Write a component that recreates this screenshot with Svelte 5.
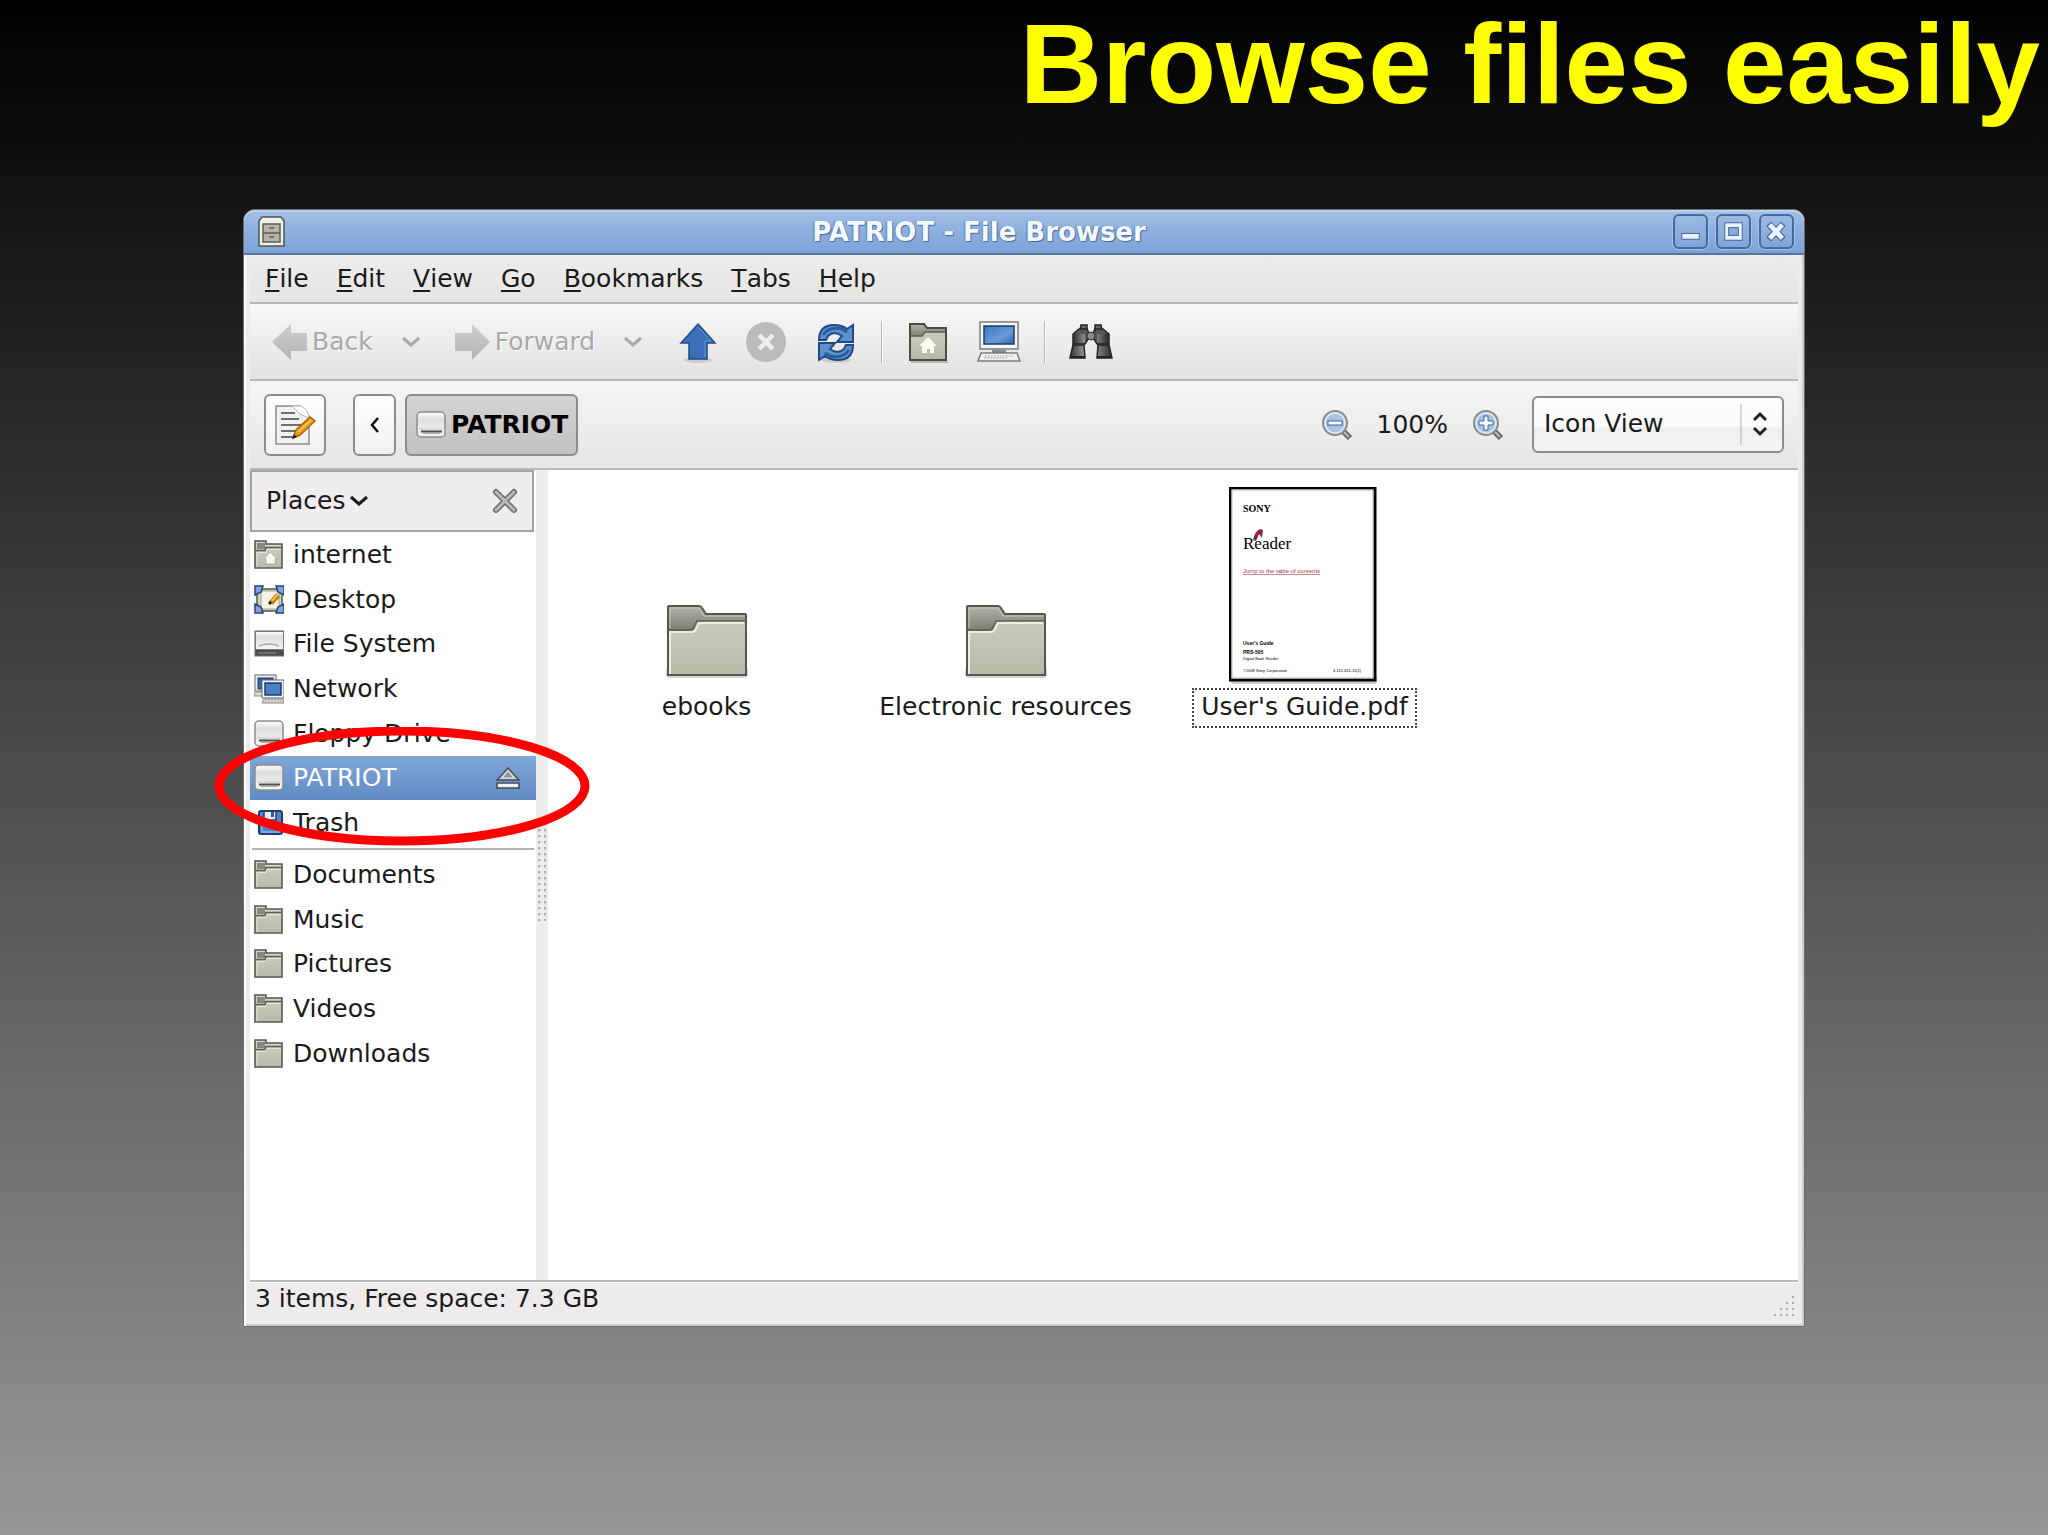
<script>
	let menus = ["File", "Edit", "View", "Go", "Bookmarks", "Tabs", "Help"];
	let places = [
		{ name: "internet", icon: "home" },
		{ name: "Desktop", icon: "desktop" },
		{ name: "File System", icon: "disk" },
		{ name: "Network", icon: "network" },
		{ name: "Floppy Drive", icon: "drive" },
		{ name: "PATRIOT", icon: "drive", eject: true },
		{ name: "Trash", icon: "trash" },
	];
	let bookmarks = ["Documents", "Music", "Pictures", "Videos", "Downloads"];
	let files = [
		{ name: "ebooks", type: "folder" },
		{ name: "Electronic resources", type: "folder" },
		{ name: "User's Guide.pdf", type: "pdf" },
	];

	let current = $state("PATRIOT");
	let focused = $state("User's Guide.pdf");
	let view = $state("Icon View");
</script>

{#snippet smallFolder(home)}
	<svg class="icon" viewBox="0 0 30 30" aria-hidden="true">
		<path d="M1 28V1h11v3h16v24z" fill="#d3d5c8" stroke="#55574e" stroke-width="1.600" />
		<path d="M3 3h8v6H3z" fill="#85887d" />
		<path d="M12 7h15v20H2V10h9z" fill="url(#folderFront)" />
		<path d="M2 10.500h9l1-3h15" fill="none" stroke="#5c5e54" stroke-width="1.600" />
		<path d="M3 27V12.500h9l1-3h14" fill="none" stroke="#e4e6da" />
		{#if home}
			<path d="M16 12l7 7h-2v5h-9v-5h-2z" fill="#f7f7ef" stroke="#a3a596" stroke-width=".7" />
		{/if}
	</svg>
{/snippet}

{#snippet drive()}
	<svg class="icon" viewBox="0 0 30 30" aria-hidden="true">
		<rect x="1" y="2" width="28" height="25" rx="4" fill="url(#driveTop)" stroke="#8b8d89" stroke-width="1.500" />
		<path d="M3 19h24" stroke="#c9c9c6" />
		<path d="M5 21.500h21" stroke="#4d4f4c" stroke-width="2" />
		<path d="M7 23.500h17" stroke="#aaa" />
	</svg>
{/snippet}

{#snippet placeIcon(kind)}
	{#if kind == "home"}
		{@render smallFolder(true)}
	{:else if kind == "drive"}
		{@render drive()}
	{:else if kind == "desktop"}
		<svg class="icon" viewBox="0 0 30 30" aria-hidden="true">
			<rect x="3" y="4" width="25" height="22" fill="#cfd3c2" stroke="#55574f" stroke-width="1.500" />
			<rect x="7" y="6" width="18" height="18" rx="2" fill="#f4f3e6" stroke="#a3a88d" />
			<path d="M1 1h8l-2 6-6 3zM30 1h-8l2 6 6 3zM1 28h8l-2-6-6-3zM30 28h-8l2-6 6-3z" fill="#7fa5dc" stroke="#1f4478" stroke-width="1.500" />
			<path d="M17 18l7-8" stroke="#b97a0a" stroke-width="5" />
			<path d="M18 16l6-7" stroke="#f5c24a" stroke-width="2" />
			<path d="M15 19l2-2" stroke="#222" stroke-width="3" />
		</svg>
	{:else if kind == "disk"}
		<svg class="icon" viewBox="0 0 30 30" aria-hidden="true">
			<rect x="1" y="2" width="29" height="25" fill="#4d4f4d" stroke="#6e706d" />
			<rect x="1.500" y="2.500" width="28" height="18" fill="url(#driveTop)" stroke="#777974" />
			<path d="M5 17q10-4 20 0" fill="none" stroke="#a9aaa8" stroke-width="1.500" />
			<path d="M4 24h18" stroke="#7b7d7a" stroke-width="1.500" />
		</svg>
	{:else if kind == "network"}
		<svg class="icon" viewBox="0 0 30 30" aria-hidden="true">
			<rect x="1" y="1" width="21" height="16" fill="#eee" stroke="#666" />
			<rect x="4" y="4" width="15" height="11" fill="#3465a4" stroke="#1d3c6b" />
			<path d="M1 18h9v4H0z" fill="#dadbcf" stroke="#8f9180" />
			<rect x="8" y="6" width="22" height="18" fill="#f4f4f2" stroke="#666" />
			<rect x="11" y="9" width="16" height="12" fill="#4a80c4" stroke="#1d3c6b" stroke-width="1.500" />
			<path d="M10 25h19l1 4H8z" fill="#e5e5e3" stroke="#888" />
			<path d="M11 27h17" stroke="#999" stroke-dasharray="2 1" />
		</svg>
	{:else}
		<svg class="icon" viewBox="0 0 30 30" aria-hidden="true">
			<rect x="5" y="3" width="23" height="23" rx="2" fill="#4e83c9" stroke="#1d3f75" stroke-width="2" />
			<path d="M10 4v8h12V4" fill="#e9eef6" stroke="#1d3f75" stroke-width="1.500" />
			<path d="M17 4v5h3V4z" fill="#2b5593" />
			<path d="M8 15v9h17v-9" fill="none" stroke="#8fb3e4" stroke-width="1.500" />
		</svg>
	{/if}
{/snippet}

{#snippet chevron()}
	<svg class="chevron" viewBox="0 0 20 12" aria-hidden="true">
		<path d="M2 2l8 7 8-7" fill="none" stroke="currentColor" stroke-width="3" />
	</svg>
{/snippet}

<svg class="defs" aria-hidden="true">
	<defs>
		<linearGradient id="folderBack" x2="0" y2="1">
			<stop offset="0" stop-color="#b2b3a8" />
			<stop offset=".35" stop-color="#7c7f74" />
			<stop offset="1" stop-color="#9b9d90" />
		</linearGradient>
		<linearGradient id="folderFront" x2="0" y2="1">
			<stop offset="0" stop-color="#c9cbbc" />
			<stop offset="1" stop-color="#b9bba9" />
		</linearGradient>
		<linearGradient id="driveTop" x2="0" y2="1">
			<stop offset="0" stop-color="#fff" />
			<stop offset=".3" stop-color="#dededd" />
			<stop offset="1" stop-color="#f6f6f4" />
		</linearGradient>
		<linearGradient id="grayArrow" x2="0" y2="1">
			<stop offset="0" stop-color="#d0cfcf" />
			<stop offset="1" stop-color="#b4b3b3" />
		</linearGradient>
		<linearGradient id="screen" x2="1" y2="1">
			<stop offset="0" stop-color="#3b74bd" />
			<stop offset=".6" stop-color="#6b9bd6" />
			<stop offset="1" stop-color="#3465a4" />
		</linearGradient>
		<linearGradient id="barrel" x2="1" y2="0">
			<stop offset="0" stop-color="#333" />
			<stop offset=".45" stop-color="#b5b5b5" />
			<stop offset="1" stop-color="#2c2c2c" />
		</linearGradient>
	</defs>
</svg>

<div class="slide">
	<h1>Browse files easily</h1>

	<main>
		<header class="titlebar">
			<svg class="app" viewBox="0 0 27 31" aria-hidden="true">
				<path d="M4 1h19l3 4v25H1V5z" fill="#f1f1ec" stroke="#4f5650" stroke-width="1.500" />
				<rect x="5" y="8" width="17" height="18" fill="#b4b5a6" stroke="#5c5e54" stroke-width="1.500" />
				<path d="M5 17h17M11 12h5M11 21h5" stroke="#5c5e54" stroke-width="1.500" />
			</svg>
			<h2>PATRIOT - File Browser</h2>
			<div class="controls">
				<button aria-label="Minimize">
					<svg viewBox="0 0 32 32"><rect x="7" y="18" width="18" height="6" fill="#e9f4ff" stroke="#3d6397" /></svg>
				</button>
				<button aria-label="Maximize">
					<svg viewBox="0 0 32 32">
						<rect x="7" y="7" width="18" height="18" fill="#e9f4ff" stroke="#3d6397" />
						<rect x="11" y="12" width="10" height="8" fill="#86abdd" stroke="#3d6397" />
					</svg>
				</button>
				<button aria-label="Close">
					<svg viewBox="0 0 32 32">
						<path d="M8 8l15 16M23 8L8 24" stroke="#3d6397" stroke-width="7" />
						<path d="M9 9l13 14M22 9L9 23" stroke="#e9f4ff" stroke-width="5" />
					</svg>
				</button>
			</div>
		</header>

		<nav class="menubar">
			{#each menus as menu}
				<button><u>{menu[0]}</u>{menu.slice(1)}</button>
			{/each}
		</nav>

		<div class="toolbar">
			<button class="nav" disabled>
				<svg viewBox="0 0 38 38" width="38" height="38" aria-hidden="true">
					<path d="M1 19L20 1v9h16v18H20v9z" fill="url(#grayArrow)" />
				</svg>Back
			</button>
			<button class="drop" disabled aria-label="Back history">{@render chevron()}</button>
			<button class="nav" disabled>
				<svg viewBox="0 0 38 38" width="38" height="38" aria-hidden="true">
					<path d="M36 19L18 1v9H1v18h17v9z" fill="url(#grayArrow)" />
				</svg>Forward
			</button>
			<button class="drop" disabled aria-label="Forward history">{@render chevron()}</button>
			<button class="tool up" aria-label="Up">
				<svg viewBox="0 0 44 44">
					<ellipse cx="22" cy="40" rx="14" ry="3" fill="#000" opacity=".12" />
					<path d="M22 4l17 19h-8v16H13V23H5z" fill="#3a70b5" stroke="#1f4a87" stroke-width="1.500" />
					<path d="M22 7l13 14h-6v16" fill="none" stroke="#6d9bd2" />
				</svg>
			</button>
			<button class="tool stop" disabled aria-label="Stop">
				<svg viewBox="0 0 44 44">
					<circle cx="22" cy="22" r="20" fill="#bcbbbb" />
					<path d="M15 15l14 14M29 15L15 29" stroke="#efeeee" stroke-width="4.500" />
				</svg>
			</button>
			<button class="tool" aria-label="Reload">
				<svg viewBox="0 0 44 44">
					<ellipse cx="22" cy="40" rx="15" ry="3" fill="#000" opacity=".12" />
					<path d="M5 20Q5 5 20 5q8 0 13 4l6-4v17H23l5-6q-8-6-14 0l-2 4z" fill="#5c8fce" stroke="#1f4a87" stroke-width="2" />
					<path d="M9 15q6-9 19-6l5 3" fill="none" stroke="#2d5c9c" stroke-width="3" />
					<path d="M39 25q0 15-15 15-8 0-13-4l-6 4V23h16l-5 6q8 6 14 0l2-4z" fill="#5c8fce" stroke="#1f4a87" stroke-width="2" />
					<path d="M35 30q-6 9-19 6l-5-3" fill="none" stroke="#2d5c9c" stroke-width="3" />
				</svg>
			</button>
			<span class="sep"></span>
			<button class="tool" aria-label="Home">
				<svg viewBox="0 0 44 44">
					<path d="M5 42h37" stroke="#000" opacity=".2" stroke-width="2" fill="none" />
					<path d="M4 40V4h14l3 4h19v32z" fill="url(#folderBack)" stroke="#494b43" stroke-width="2" />
					<path d="M5 16h11l3-4h20v27H5z" fill="url(#folderFront)" />
					<path d="M5 16h11l3-4h20" fill="none" stroke="#5c5e54" stroke-width="1.500" />
					<path d="M22 17l9 9h-3v7h-4v-4h-3v4h-5v-7h-3z" fill="#fbfbf4" />
				</svg>
			</button>
			<button class="tool computer" aria-label="Computer">
				<svg viewBox="0 0 44 44">
					<rect x="3" y="2" width="38" height="27" fill="#f7f7f5" stroke="#7b7d79" stroke-width="1.500" />
					<rect x="7" y="6" width="30" height="18" fill="url(#screen)" stroke="#1d3c6b" stroke-width="1.500" />
					<path d="M15 30h14v3H15z" fill="#8c8e8a" />
					<path d="M4 33h36l3 8H1z" fill="#f1f1ef" stroke="#7b7d79" stroke-width="1.500" />
					<path d="M8 36h28M7 38h24" stroke="#aaa" stroke-dasharray="2 1" />
				</svg>
			</button>
			<span class="sep"></span>
			<button class="tool" aria-label="Search">
				<svg viewBox="0 0 44 44">
					<path d="M12 5h6v5h-7zM26 5h6l1 5h-7z" fill="#666" stroke="#222" stroke-width="1.500" />
					<path d="M4 14l6-5h8l2 4h4l2-4h8l6 5v10H28l-3-5h-6l-3 5H4z" fill="#555" stroke="#222" stroke-width="1.500" />
					<path d="M5 14h11v9H5zM28 14h11v9H28z" fill="url(#barrel)" />
					<circle cx="22" cy="16" r="4" fill="#8b8b8b" stroke="#333" />
					<path d="M4 25h11l1 13H1zM29 25h11l3 13H28z" fill="url(#barrel)" stroke="#222" stroke-width="1.500" />
					<path d="M1 37h15M28 37h15" stroke="#222" stroke-width="2" />
				</svg>
			</button>
		</div>

		<div class="location">
			<button class="box edit" aria-label="Edit location">
				<svg viewBox="0 0 42 42" width="42" height="42">
					<path d="M2 2h23l10 10v28H2z" fill="#f1f1ef" stroke="#8b8d89" stroke-width="1.500" />
					<path d="M18 2h9q8 4 8 12l-9-4z" fill="#fff" stroke="#b5b7b3" />
					<path d="M7 9h14M7 15h18M7 21h20M7 27h14M7 33h12" stroke="#6f716d" stroke-width="2" />
					<path d="M19 34l3-8 14-13 5 4-15 14z" fill="#f59d18" stroke="#a8640a" stroke-width="1.500" />
					<path d="M24 28l13-12" stroke="#fdcb70" stroke-width="1.500" />
					<path d="M18 35l2-5 3 3z" fill="#222" />
				</svg>
			</button>
			<button class="box prev" aria-label="Show parents">
				<svg viewBox="0 0 12 18" width="12" height="18">
					<path d="M9 2L3 9l6 7" fill="none" stroke="#111" stroke-width="2.500" />
				</svg>
			</button>
			<button class="box path">{@render drive()}PATRIOT</button>
			<div class="zoom">
				<button aria-label="Zoom out">
					<svg viewBox="0 0 32 32" width="32" height="32">
						<path d="M22 22l7 7" stroke="#666" stroke-width="6" />
						<path d="M23 23l5 5" stroke="#bbb" stroke-width="2" />
						<circle cx="14" cy="14" r="12" fill="#a9c3e6" stroke="#8b8d89" stroke-width="2" />
						<circle cx="14" cy="14" r="10" fill="none" stroke="#e3ebf5" stroke-width="1.500" />
						<rect x="7" y="12" width="14" height="4" fill="#fff" stroke="#3465a4" />
					</svg>
				</button>
				<output>100%</output>
				<button aria-label="Zoom in">
					<svg viewBox="0 0 32 32" width="32" height="32">
						<path d="M22 22l7 7" stroke="#666" stroke-width="6" />
						<path d="M23 23l5 5" stroke="#bbb" stroke-width="2" />
						<circle cx="14" cy="14" r="12" fill="#a9c3e6" stroke="#8b8d89" stroke-width="2" />
						<circle cx="14" cy="14" r="10" fill="none" stroke="#e3ebf5" stroke-width="1.500" />
						<path d="M12 7h4v5h5v4h-5v5h-4v-5H7v-4h5z" fill="#fff" stroke="#3465a4" />
					</svg>
				</button>
			</div>
			<div class="combo">
				<select aria-label="View" bind:value={view}>
					<option>Icon View</option>
					<option>List View</option>
					<option>Compact View</option>
				</select>
				<svg viewBox="0 0 44 56" aria-hidden="true">
					<path d="M1 8v41" stroke="#b3b1b0" />
					<path d="M14 24l6-6 6 6M14 32l6 6 6-6" fill="none" stroke="#222" stroke-width="3" />
				</svg>
			</div>
		</div>

		<div class="panes">
			<aside>
				<div class="head">
					<button class="places-menu">Places{@render chevron()}</button>
					<button aria-label="Close side pane">
						<svg viewBox="0 0 26 26" width="26" height="26">
							<path d="M4 4l18 18M22 4L4 22" stroke="#6e6e6e" stroke-width="6" stroke-linecap="round" />
							<path d="M4 4l18 18M22 4L4 22" stroke="#b9b9b9" stroke-width="3" stroke-linecap="round" />
						</svg>
					</button>
				</div>
				<ul class="places">
					{#each places as place}
						<li class:selected={current == place.name}>
							<button onclick={() => (current = place.name)}>
								{@render placeIcon(place.icon)}
								<span>{place.name}</span>
								{#if place.eject}
									<svg class="eject" viewBox="0 0 24 24" aria-hidden="true">
										<path d="M12 2L23 14H1z" fill="#b9bfc6" stroke="#444c55" stroke-width="1.500" />
										<path d="M12 5l6 7H6z" fill="#8a929b" stroke="#eef1f4" />
										<rect x="1" y="17" width="22" height="5" fill="#eef1f4" stroke="#444c55" stroke-width="1.500" />
									</svg>
								{/if}
							</button>
						</li>
					{/each}
				</ul>
				<hr />
				<ul class="bookmarks">
					{#each bookmarks as name}
						<li class:selected={current == name}>
							<button onclick={() => (current = name)}>
								{@render smallFolder(false)}
								<span>{name}</span>
							</button>
						</li>
					{/each}
				</ul>
				<svg class="ring" viewBox="0 0 376 120" aria-hidden="true">
					<ellipse cx="188" cy="59" rx="183" ry="55" fill="none" stroke="#f00" stroke-width="9" />
				</svg>
			</aside>
			<div class="gutter"><span></span></div>
			<section class="files">
				{#each files as file}
					<button class="file" class:focused={focused == file.name} onclick={() => (focused = file.name)}>
						{#if file.type == "folder"}
							<svg viewBox="0 0 84 76" width="84" height="76" aria-hidden="true">
								<rect x="1" y="63" width="82" height="12" rx="4" fill="#000" opacity=".16" />
								<path d="M3 72V4q0-1 1-1h30q2 0 3 2l4 6h39q1 0 1 1v60z" fill="url(#folderBack)" stroke="#55574e" stroke-width="2" />
								<path d="M4 71V28h22q3 0 4-3l3-7h47v53z" fill="url(#folderFront)" />
								<path d="M3 27h22q3 0 4-3l3-6h49" fill="none" stroke="#5f6157" stroke-width="1.500" />
								<path d="M5 71V29h22q3 0 4-3l3-6h45" fill="none" stroke="#eceee2" stroke-width="2" />
								<path d="M5 25V5h29l5 8h41" fill="none" stroke="#c6c8bd" />
							</svg>
						{:else}
							<svg class="thumb" viewBox="0 0 152 198" width="152" height="198" aria-hidden="true">
								<rect x="2" y="188" width="146" height="9" rx="3" fill="#000" opacity=".22" />
								<rect x="1" y="1" width="145" height="192" fill="#fff" stroke="#000" stroke-width="3" />
								<rect x="3" y="3" width="141" height="188" fill="none" stroke="#bbb" />
								<text class="serif" x="14" y="25" font-size="10" font-weight="bold">SONY</text>
								<text class="serif" x="14" y="62" font-size="17">Reader</text>
								<path d="M24 53q2-9 7-11l3 1-1 8-3-4-3 7z" fill="#8c2440" />
								<text x="14" y="86" font-size="6" fill="#b0343c" text-decoration="underline">Jump to the table of contents</text>
								<text x="14" y="158" font-size="5" font-weight="bold">User's Guide</text>
								<text x="14" y="167" font-size="5" font-weight="bold">PRS-505</text>
								<text x="14" y="173" font-size="4">Digital Book Reader</text>
								<text x="14" y="185" font-size="4">©2008 Sony Corporation</text>
								<text x="104" y="185" font-size="4">4-115-611-11(1)</text>
							</svg>
						{/if}
						<span>{file.name}</span>
					</button>
				{/each}
			</section>
		</div>

		<footer>
			<span>3 items, Free space: 7.3 GB</span>
			<svg viewBox="0 0 24 24" width="24" height="24" aria-hidden="true">
				<path d="M20 3h2M14 9h2M20 9h2M8 15h2M14 15h2M20 15h2M2 21h2M8 21h2M14 21h2M20 21h2" stroke="#aaa8a8" stroke-width="2" />
			</svg>
		</footer>
	</main>
</div>

<style>
	:global(body) {
		margin: 0;
	}
	.defs {
		position: absolute;
		width: 0;
		height: 0;
	}
	.slide {
		box-sizing: border-box;
		min-height: 100vh;
		display: flex;
		flex-direction: column;
		padding: 0 243px 208px;
		background: linear-gradient(#000, #989798);
		font-family: "DejaVu Sans", sans-serif;
		font-size: 25px;
		line-height: 30px;
		color: #1a1a1a;
	}
	h1 {
		margin: 0 -235px 81px 0;
		text-align: right;
		font-family: "Liberation Sans", Arial, sans-serif;
		font-size: 114px;
		line-height: 128px;
		color: #ff0;
	}
	button {
		display: flex;
		align-items: center;
		margin: 0;
		padding: 0;
		border: 0;
		background: none;
		font: inherit;
		color: inherit;
	}
	svg {
		display: block;
		flex: none;
	}
	main {
		flex: 1;
		display: flex;
		flex-direction: column;
		padding: 0 6px 4px;
		border: 1px solid #6f6d6c;
		border-radius: 12px 12px 0 0;
		background: #edebeb;
		box-shadow: inset 2px 0 #fbfbfb, inset -2px -2px #cfcdcc;
	}

	.titlebar {
		display: flex;
		align-items: center;
		height: 43px;
		margin: 0 -6px;
		padding: 0 10px 0 14px;
		border-bottom: 2px solid #54769f;
		border-radius: 11px 11px 0 0;
		background: linear-gradient(#a3bfe6, #8db0de 50%, #7ba1d6);
		box-shadow: inset 0 2px #b9cfee;
	}
	.app {
		width: 27px;
		height: 31px;
	}
	h2 {
		flex: 1;
		margin: 0;
		text-align: center;
		font-size: 26px;
		color: #f4f9ff;
		text-shadow: 1px 1px 1px #45679a, -1px 0 1px #5c80b4;
	}
	.controls {
		display: flex;
		gap: 8px;
	}
	.controls button {
		box-sizing: border-box;
		justify-content: center;
		width: 35px;
		height: 35px;
		border: 2px solid #426a9f;
		border-radius: 6px;
		box-shadow: 0 0 0 1px #a6c2e8;
	}
	.controls svg {
		width: 31px;
		height: 31px;
	}

	.menubar {
		display: flex;
		gap: 28px;
		height: 47px;
		padding: 0 15px;
		border-bottom: 2px solid #b9b7b6;
		background: linear-gradient(#edecec, #e6e5e4);
	}
	.menubar u {
		text-decoration-thickness: 2px;
		text-underline-offset: 3px;
	}

	.toolbar {
		display: flex;
		align-items: center;
		height: 75px;
		padding-left: 21px;
		border-bottom: 2px solid #b9b7b6;
		background: linear-gradient(#f8f7f7, #e3e1e1);
	}
	.nav {
		gap: 3px;
		color: #a9a8a8;
		text-shadow: 1px 1px #fff;
	}
	.drop {
		padding: 0 33px 0 28px;
		color: #a9a8a8;
	}
	.chevron {
		width: 20px;
		height: 12px;
	}
	.tool svg {
		width: 44px;
		height: 44px;
	}
	.up {
		margin-right: 24px;
	}
	.stop {
		margin-right: 26px;
	}
	.computer {
		margin-left: 27px;
	}
	.sep {
		width: 1px;
		height: 42px;
		margin: 0 23px;
		border-right: 1px solid #fff;
		background: #b5b3b3;
	}

	.location {
		display: flex;
		align-items: center;
		height: 87px;
		padding: 0 14px;
		border-bottom: 2px solid #b9b7b6;
		background: linear-gradient(#f6f5f5, #e7e5e5);
	}
	.box {
		box-sizing: border-box;
		justify-content: center;
		height: 62px;
		border: 2px solid #8f8d8c;
		border-radius: 6px;
		background: linear-gradient(#fff, #f2f1f1);
	}
	.edit {
		width: 62px;
	}
	.prev {
		width: 43px;
		margin: 0 9px 0 27px;
	}
	.path {
		gap: 5px;
		padding: 0 8px 0 9px;
		background: linear-gradient(#d5d3d2, #c3c1c0);
		font-weight: bold;
		color: #000;
	}
	.zoom {
		display: flex;
		align-items: center;
		gap: 24px;
		margin-left: auto;
	}
	.combo {
		display: grid;
		width: 252px;
		margin-left: 28px;
	}
	.combo select,
	.combo svg {
		grid-area: 1 / 1;
	}
	.combo select {
		appearance: none;
		height: 57px;
		padding: 0 10px 2px;
		border: 2px solid #8f8d8c;
		border-radius: 6px;
		background: linear-gradient(#fff, #fafafa 55%, #efeeee 56%, #f6f5f5);
		font: inherit;
		color: inherit;
	}
	.combo svg {
		justify-self: end;
		width: 44px;
		height: 56px;
		pointer-events: none;
	}

	.panes {
		flex: 1;
		display: flex;
		background: #fff;
	}
	aside {
		position: relative;
		width: 286px;
	}
	.head {
		box-sizing: border-box;
		display: flex;
		justify-content: space-between;
		align-items: center;
		height: 62px;
		margin-right: 2px;
		padding: 0 14px;
		border: 2px solid #a4a2a1;
		background: #efeded;
	}
	.places-menu {
		gap: 3px;
	}
	ul {
		display: grid;
		grid-auto-rows: 1fr;
		margin: 0;
		padding: 0;
		list-style: none;
	}
	.places {
		height: 312px;
		margin-top: 1px;
	}
	.bookmarks {
		height: 223px;
	}
	li button {
		gap: 9px;
		width: 100%;
		height: 100%;
		padding: 0 16px 0 4px;
	}
	li span {
		flex: 1;
		text-align: left;
	}
	.selected {
		background: linear-gradient(#82a7d9, #5f8ac3);
		color: #fff;
	}
	.icon {
		width: 30px;
		height: 30px;
	}
	.eject {
		width: 24px;
		height: 24px;
	}
	hr {
		margin: 3px 2px;
		border: 0;
		border-top: 2px solid #b5b3b2;
	}
	.ring {
		position: absolute;
		top: 257px;
		left: -36px;
		width: 376px;
		height: 120px;
		pointer-events: none;
	}
	.gutter {
		display: flex;
		align-items: center;
		justify-content: center;
		width: 12px;
		background: #eeeded;
	}
	.gutter span {
		width: 8px;
		height: 92px;
		background: radial-gradient(circle at 1px 1px, #b0aeae 1px, transparent 2px) 0 0 / 6px 6px;
	}
	.files {
		flex: 1;
		display: grid;
		grid-template-columns: repeat(auto-fill, 299px);
		grid-template-rows: 258px;
		padding-left: 9px;
	}
	.file {
		flex-direction: column;
		justify-content: flex-end;
	}
	.file span {
		margin-top: 9px;
		padding: 2px 7px 4px;
		border: 2px dotted transparent;
	}
	.thumb + span {
		margin-top: 3px;
	}
	.file.focused span {
		border-color: #444;
	}
	.thumb text {
		font-family: "Liberation Sans", sans-serif;
	}
	.thumb .serif {
		font-family: "Liberation Serif", serif;
	}

	footer {
		display: flex;
		align-items: center;
		justify-content: space-between;
		height: 40px;
		padding: 0 2px 0 5px;
		border-top: 2px solid #b9b7b6;
		box-shadow: inset 0 1px #fff;
	}
	footer span {
		padding-bottom: 6px;
	}
	footer svg {
		align-self: flex-end;
		margin-bottom: 4px;
	}
</style>
